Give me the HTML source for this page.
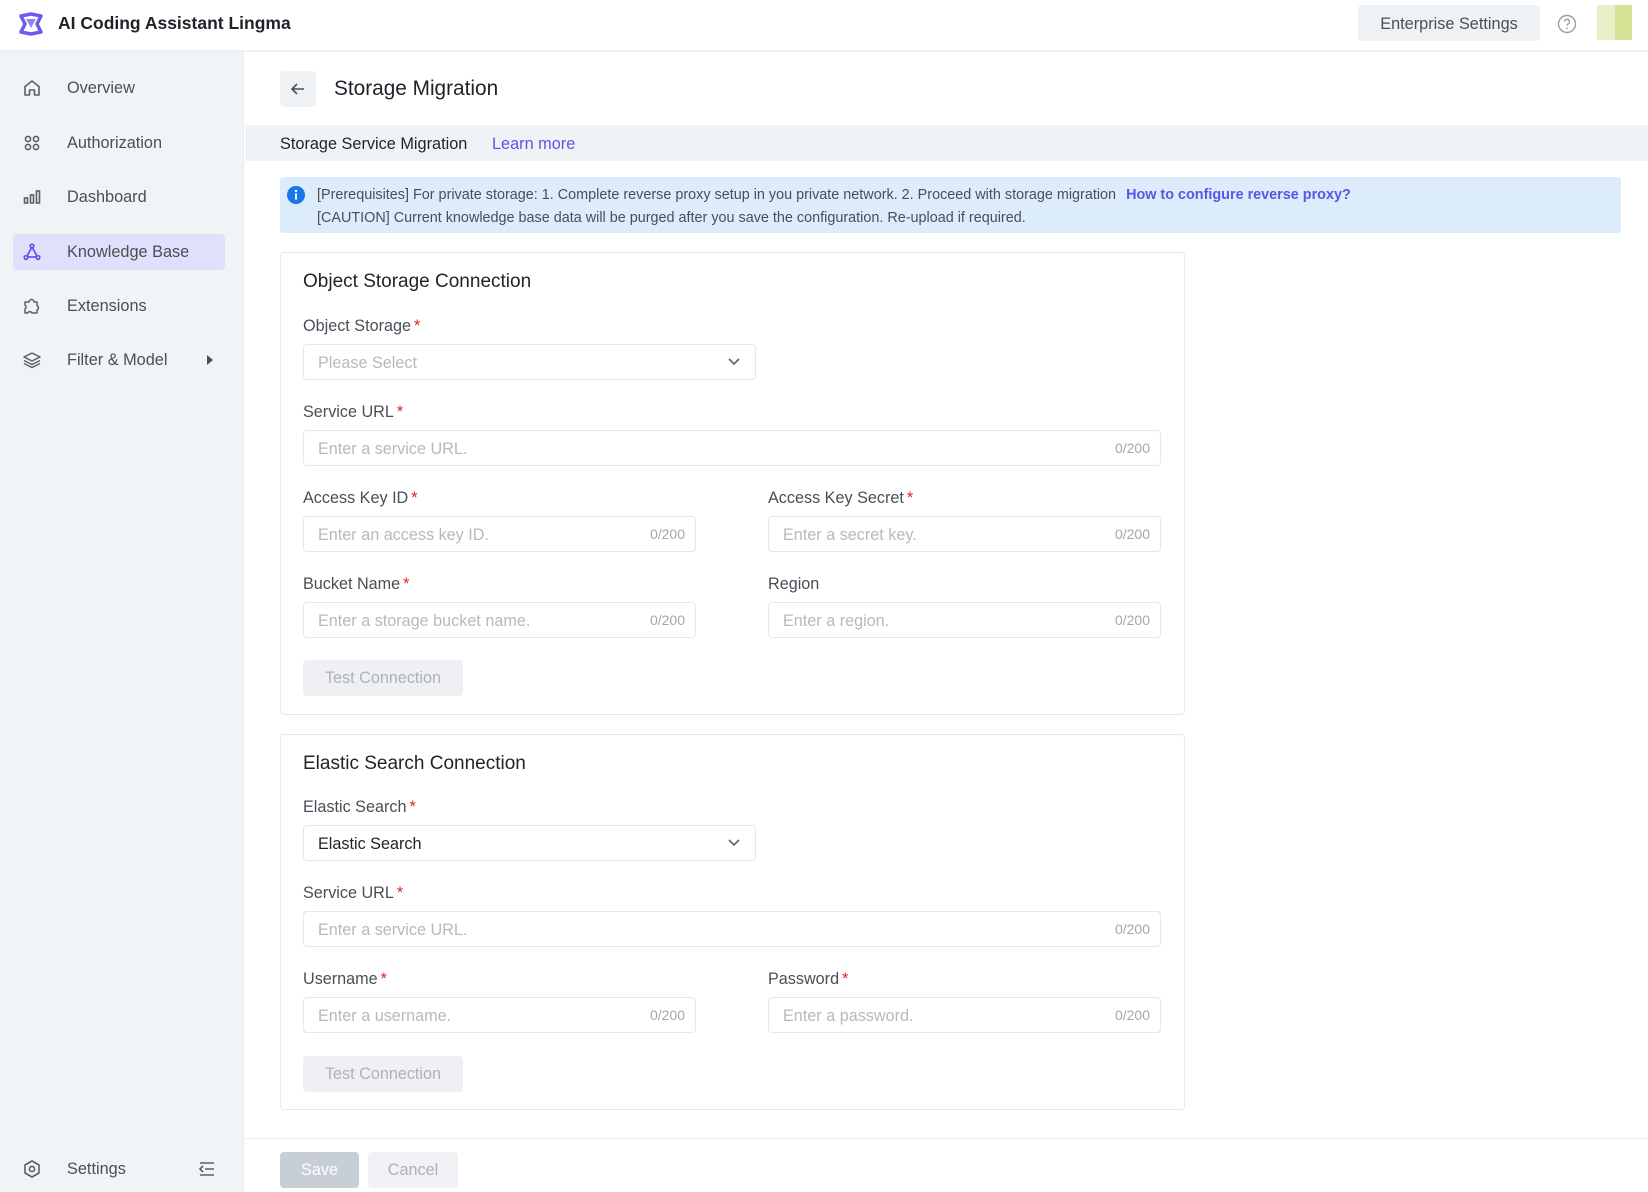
<!DOCTYPE html>
<html><head><meta charset="utf-8"><style>
*{box-sizing:border-box;margin:0;padding:0}
body{width:1648px;height:1192px;overflow:hidden;font-family:"Liberation Sans",sans-serif;background:#fff;color:#1f2329;position:relative}
.abs{position:absolute}
.hdr{left:0;top:0;width:1648px;height:52px;border-bottom:2px solid #eef0f3;background:#fff}
.side{left:0;top:52px;width:244px;height:1140px;background:#f1f4f7;border-right:1px solid #e8ebef}
.nav{position:absolute;left:13px;width:212px;height:36px;display:flex;align-items:center;font-size:16.3px;color:#4a4f57}
.nav svg{position:absolute;left:9px}
.nav span{position:absolute;left:54px;top:9px}
.nav.act{background:#e0e0fb;border-radius:4px}
.lbl{position:absolute;font-size:16.2px;color:#4a4f57}
.lbl i{color:#e02020;font-style:normal;margin-left:3px}
.inp{position:absolute;height:36px;border:1px solid #e4e7eb;border-radius:4px;font-size:16.2px;color:#b6b9be;padding-left:14px;line-height:36px;background:#fff}
.inp b{position:absolute;right:10px;top:0;font-weight:normal;font-size:14px;color:#a3a6ab;line-height:34px}
.card{position:absolute;left:280px;width:905px;border:1px solid #e6e9ed;border-radius:4px;background:#fff}
.ct{position:absolute;left:303px;font-size:19px;color:#1f2329}
.btn{position:absolute;height:36px;border-radius:4px;background:#eef0f3;color:#aeb2b8;font-size:16.2px;text-align:center;line-height:37px}
</style></head><body>
<div class="abs hdr"></div>
<svg class="abs" style="left:18px;top:11px" width="26" height="26" viewBox="0 0 26 26"><path d="M3 5 L13 3 L23 5 L19 13 L23 21 L13 23 L3 21 L7 13 Z" fill="none" stroke="#6a5cf0" stroke-width="3.5" stroke-linejoin="round"/><path d="M8 8 L18 8 L13 17 Z" fill="#8f84f6"/></svg>
<div class="abs" style="left:58px;top:13px;font-size:17.5px;font-weight:600;color:#1f2329">AI Coding Assistant Lingma</div>
<div class="abs" style="left:1358px;top:5px;width:182px;height:36px;background:#eff2f5;border-radius:4px;font-size:16.3px;color:#4a4f57;text-align:center;line-height:38px">Enterprise Settings</div>
<svg class="abs" style="left:1557px;top:14px" width="20" height="20" viewBox="0 0 20 20"><circle cx="10" cy="10" r="8.5" fill="none" stroke="#9a9ea4" stroke-width="1.4"/><path d="M7.5 7.8a2.5 2.5 0 1 1 3.4 2.3c-.7.3-.9.7-.9 1.5" fill="none" stroke="#9a9ea4" stroke-width="1.4"/><circle cx="10" cy="14.3" r=".9" fill="#9a9ea4"/></svg>
<div class="abs" style="left:1597px;top:5px;width:18px;height:35px;background:#e7f0c8"></div>
<div class="abs" style="left:1615px;top:5px;width:17px;height:35px;background:#d6e395"></div>

<div class="abs side"></div>
<div class="nav" style="top:70px"><svg width="20" height="20" viewBox="0 0 20 20"><path d="M3 8.5 L10 3 L17 8.5 V17 H12.5 V12 H7.5 V17 H3 Z" fill="none" stroke="#5b6068" stroke-width="1.6" stroke-linejoin="round"/></svg><span>Overview</span></div>
<div class="nav" style="top:125px"><svg width="20" height="20" viewBox="0 0 20 20" fill="none" stroke="#5b6068" stroke-width="1.6"><circle cx="6" cy="6" r="2.6"/><circle cx="14" cy="6" r="2.6"/><circle cx="6" cy="14" r="2.6"/><circle cx="14" cy="14" r="2.6"/></svg><span>Authorization</span></div>
<div class="nav" style="top:179px"><svg width="20" height="20" viewBox="0 0 20 20" fill="none" stroke="#5b6068" stroke-width="1.6"><rect x="2.5" y="11" width="3" height="5"/><rect x="8.5" y="8" width="3" height="8"/><rect x="14.5" y="4" width="3" height="12"/></svg><span>Dashboard</span></div>
<div class="nav act" style="top:234px"><svg width="20" height="20" viewBox="0 0 20 20" fill="none" stroke="#5f55e8" stroke-width="1.7"><path d="M10 5 L4.5 15 M10 5 L15.5 15 M4.5 15 H15.5"/><circle cx="10" cy="4" r="1.8" fill="#e0e0fb"/><circle cx="4" cy="15.5" r="1.8" fill="#e0e0fb"/><circle cx="16" cy="15.5" r="1.8" fill="#e0e0fb"/></svg><span>Knowledge Base</span></div>
<div class="nav" style="top:288px"><svg width="20" height="20" viewBox="0 0 20 20"><path d="M3 6 H7 A2.5 2.5 0 0 1 12 6 H15 V9.5 A2.5 2.5 0 0 1 15 14 V17 H10 A2.5 2.5 0 0 0 5.5 17 H3 V13 A2.5 2.5 0 0 0 3 9 Z" fill="none" stroke="#5b6068" stroke-width="1.5" stroke-linejoin="round"/></svg><span>Extensions</span></div>
<div class="nav" style="top:342px"><svg width="20" height="20" viewBox="0 0 20 20" fill="none" stroke="#5b6068" stroke-width="1.5" stroke-linejoin="round"><path d="M10 3 L18 7 L10 11 L2 7 Z"/><path d="M2 10.5 L10 14.5 L18 10.5"/><path d="M2 13.5 L10 17.5 L18 13.5"/></svg><span>Filter &amp; Model</span><svg style="left:192px" width="10" height="12" viewBox="0 0 10 12"><path d="M2 1 L8 6 L2 11 Z" fill="#4a4f57"/></svg></div>
<div class="nav" style="top:1151px"><svg width="20" height="20" viewBox="0 0 20 20" fill="none" stroke="#5b6068" stroke-width="1.6"><path d="M10 2 L17 6 V14 L10 18 L3 14 V6 Z" stroke-linejoin="round"/><circle cx="10" cy="10" r="2.6"/></svg><span>Settings</span><svg style="left:185px" width="18" height="16" viewBox="0 0 18 16" fill="none" stroke="#5b6068" stroke-width="1.6"><path d="M2 2 H16 M7 8 H16 M2 14 H16 M5 5 L2 8 L5 11"/></svg></div>

<div class="abs" style="left:280px;top:71px;width:36px;height:36px;background:#eff2f5;border-radius:4px"></div>
<svg class="abs" style="left:289px;top:80px" width="18" height="18" viewBox="0 0 18 18" fill="none" stroke="#4a4f57" stroke-width="1.6"><path d="M15 9 H3 M8 4 L3 9 L8 14"/></svg>
<div class="abs" style="left:334px;top:77px;font-size:20.8px;color:#1f2329">Storage Migration</div>

<div class="abs" style="left:245px;top:125px;width:1403px;height:36px;background:#f0f3f6"></div>
<div class="abs" style="left:280px;top:135px;font-size:16.3px;color:#1f2329">Storage Service Migration</div>
<div class="abs" style="left:492px;top:135px;font-size:16.3px;color:#5b55e6">Learn more</div>

<div class="abs" style="left:280px;top:177px;width:1341px;height:56px;background:#dcecfb;border-radius:3px"></div>
<svg class="abs" style="left:287px;top:186px" width="18" height="18" viewBox="0 0 18 18"><circle cx="9" cy="9" r="9" fill="#1677e8"/><rect x="8" y="7.5" width="2" height="6" fill="#fff"/><circle cx="9" cy="5" r="1.2" fill="#fff"/></svg>
<div class="abs" style="left:317px;top:187px;font-size:14.4px;color:#4a4f57;white-space:nowrap">[Prerequisites] For private storage: 1. Complete reverse proxy setup in you private network. 2. Proceed with storage migration <b style="color:#5b55e6;margin-left:6px">How to configure reverse proxy?</b></div>
<div class="abs" style="left:317px;top:210px;font-size:14.4px;color:#4a4f57;white-space:nowrap">[CAUTION] Current knowledge base data will be purged after you save the configuration. Re-upload if required.</div>

<div class="card" style="top:252px;height:463px"></div>
<div class="ct" style="top:271px">Object Storage Connection</div>
<div class="lbl" style="left:303px;top:317px">Object Storage<i>*</i></div>
<div class="inp" style="left:303px;top:344px;width:453px">Please Select<svg style="position:absolute;right:14px;top:12px" width="14" height="10" viewBox="0 0 14 10" fill="none" stroke="#5b6068" stroke-width="1.6"><path d="M2 2 L7 7 L12 2"/></svg></div>
<div class="lbl" style="left:303px;top:403px">Service URL<i>*</i></div>
<div class="inp" style="left:303px;top:430px;width:858px">Enter a service URL.<b>0/200</b></div>
<div class="lbl" style="left:303px;top:489px">Access Key ID<i>*</i></div>
<div class="inp" style="left:303px;top:516px;width:393px">Enter an access key ID.<b>0/200</b></div>
<div class="lbl" style="left:768px;top:489px">Access Key Secret<i>*</i></div>
<div class="inp" style="left:768px;top:516px;width:393px">Enter a secret key.<b>0/200</b></div>
<div class="lbl" style="left:303px;top:575px">Bucket Name<i>*</i></div>
<div class="inp" style="left:303px;top:602px;width:393px">Enter a storage bucket name.<b>0/200</b></div>
<div class="lbl" style="left:768px;top:575px">Region</div>
<div class="inp" style="left:768px;top:602px;width:393px">Enter a region.<b>0/200</b></div>
<div class="btn" style="left:303px;top:660px;width:160px">Test Connection</div>

<div class="card" style="top:734px;height:376px"></div>
<div class="ct" style="top:753px">Elastic Search Connection</div>
<div class="lbl" style="left:303px;top:798px">Elastic Search<i>*</i></div>
<div class="inp" style="left:303px;top:825px;width:453px;color:#1f2329">Elastic Search<svg style="position:absolute;right:14px;top:12px" width="14" height="10" viewBox="0 0 14 10" fill="none" stroke="#5b6068" stroke-width="1.6"><path d="M2 2 L7 7 L12 2"/></svg></div>
<div class="lbl" style="left:303px;top:884px">Service URL<i>*</i></div>
<div class="inp" style="left:303px;top:911px;width:858px">Enter a service URL.<b>0/200</b></div>
<div class="lbl" style="left:303px;top:970px">Username<i>*</i></div>
<div class="inp" style="left:303px;top:997px;width:393px">Enter a username.<b>0/200</b></div>
<div class="lbl" style="left:768px;top:970px">Password<i>*</i></div>
<div class="inp" style="left:768px;top:997px;width:393px">Enter a password.<b>0/200</b></div>
<div class="btn" style="left:303px;top:1056px;width:160px">Test Connection</div>

<div class="abs" style="left:245px;top:1138px;width:1403px;height:1px;background:#e8ebef"></div>
<div class="btn" style="left:280px;top:1152px;width:79px;background:#c7ced6;color:#fff">Save</div>
<div class="btn" style="left:368px;top:1152px;width:90px;background:#f0f2f5;color:#aeb2b8">Cancel</div>
</body></html>
